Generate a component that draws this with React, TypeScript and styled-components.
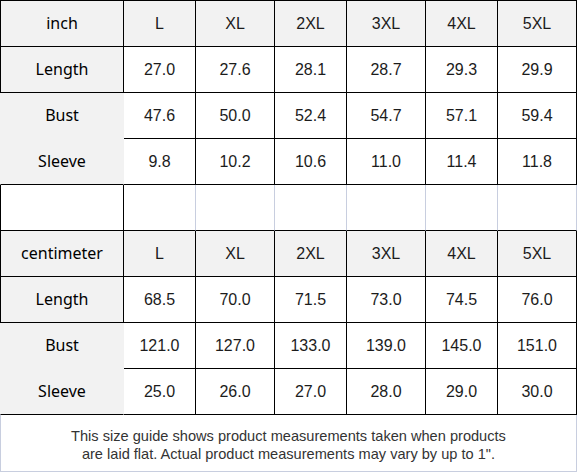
import React from "react";
import styled, { createGlobalStyle, css } from "styled-components";

const Global = createGlobalStyle`
  html, body { margin: 0; padding: 0; background: #ffffff; }
  body { font-family: "Liberation Sans", Arial, sans-serif; }
`;

const LINE = "#000000";
const SOFT = "#c8cedf";
const GRAY = "#f2f2f2";

const Sheet = styled.div`
  width: 577px;
`;

const Grid = styled.div`
  display: grid;
  grid-template-columns: 124px 72px 79px 72px 79px 72px 79px;
  grid-auto-rows: 46px;
  border-top: 1px solid ${LINE};
`;

type CellProps = {
  $gray?: boolean;
  $label?: boolean;
  $first?: boolean;
  $open?: boolean;
  $noBottom?: boolean;
  $soft?: boolean;
};

const Cell = styled.div<CellProps>`
  box-sizing: border-box;
  display: flex;
  align-items: center;
  justify-content: center;
  background: ${(p) => (p.$gray ? GRAY : "#ffffff")};
  border-right: 1px solid ${(p) => (p.$open ? "transparent" : p.$soft ? SOFT : LINE)};
  border-bottom: 1px solid ${(p) => (p.$noBottom ? "transparent" : LINE)};
  ${(p) =>
    p.$first &&
    css`
      border-left: 1px solid ${p.$open ? "transparent" : LINE};
    `}
  font-family: ${(p) =>
    p.$label
      ? `"Noto Sans", "Noto Sans CJK SC", sans-serif`
      : `"Liberation Sans", Arial, sans-serif`};
  font-size: 16px;
  color: ${(p) => (p.$label ? "#000000" : "#1c1c1c")};
  padding-bottom: ${(p) => (p.$label ? "2px" : "0")};
`;

const Note = styled.div`
  box-sizing: border-box;
  height: 57px;
  border-left: 1px solid ${SOFT};
  border-right: 1px solid ${SOFT};
  border-bottom: 1px solid ${SOFT};
  padding-top: 12px;
  text-align: center;
  font-family: "Liberation Sans", Arial, sans-serif;
  font-size: 14.6px;
  line-height: 18px;
  color: #333333;
`;

const sizes = ["L", "XL", "2XL", "3XL", "4XL", "5XL"];

type Block = {
  unit: string;
  rows: { name: string; values: string[] }[];
};

const blocks: Block[] = [
  {
    unit: "inch",
    rows: [
      { name: "Length", values: ["27.0", "27.6", "28.1", "28.7", "29.3", "29.9"] },
      { name: "Bust", values: ["47.6", "50.0", "52.4", "54.7", "57.1", "59.4"] },
      { name: "Sleeve", values: ["9.8", "10.2", "10.6", "11.0", "11.4", "11.8"] },
    ],
  },
  {
    unit: "centimeter",
    rows: [
      { name: "Length", values: ["68.5", "70.0", "71.5", "73.0", "74.5", "76.0"] },
      { name: "Bust", values: ["121.0", "127.0", "133.0", "139.0", "145.0", "151.0"] },
      { name: "Sleeve", values: ["25.0", "26.0", "27.0", "28.0", "29.0", "30.0"] },
    ],
  },
];

function SizeBlock({ block }: { block: Block }) {
  return (
    <>
      <Cell $gray $label $first>
        {block.unit}
      </Cell>
      {sizes.map((s) => (
        <Cell key={s} $gray>
          {s}
        </Cell>
      ))}
      {block.rows.map((r) => {
        const open = r.name !== "Length";
        return (
          <React.Fragment key={r.name}>
            <Cell $gray $label $first $open={open} $noBottom={r.name === "Bust"}>
              {r.name}
            </Cell>
            {r.values.map((v, i) => (
              <Cell key={i}>{v}</Cell>
            ))}
          </React.Fragment>
        );
      })}
    </>
  );
}

export default function App() {
  return (
    <Sheet>
      <Global />
      <Grid>
        <SizeBlock block={blocks[0]} />
        <Cell $first />
        {sizes.map((s) => (
          <Cell key={s} $soft />
        ))}
        <SizeBlock block={blocks[1]} />
      </Grid>
      <Note>
        This size guide shows product measurements taken when products
        <br />
        are laid flat. Actual product measurements may vary by up to 1".
      </Note>
    </Sheet>
  );
}
